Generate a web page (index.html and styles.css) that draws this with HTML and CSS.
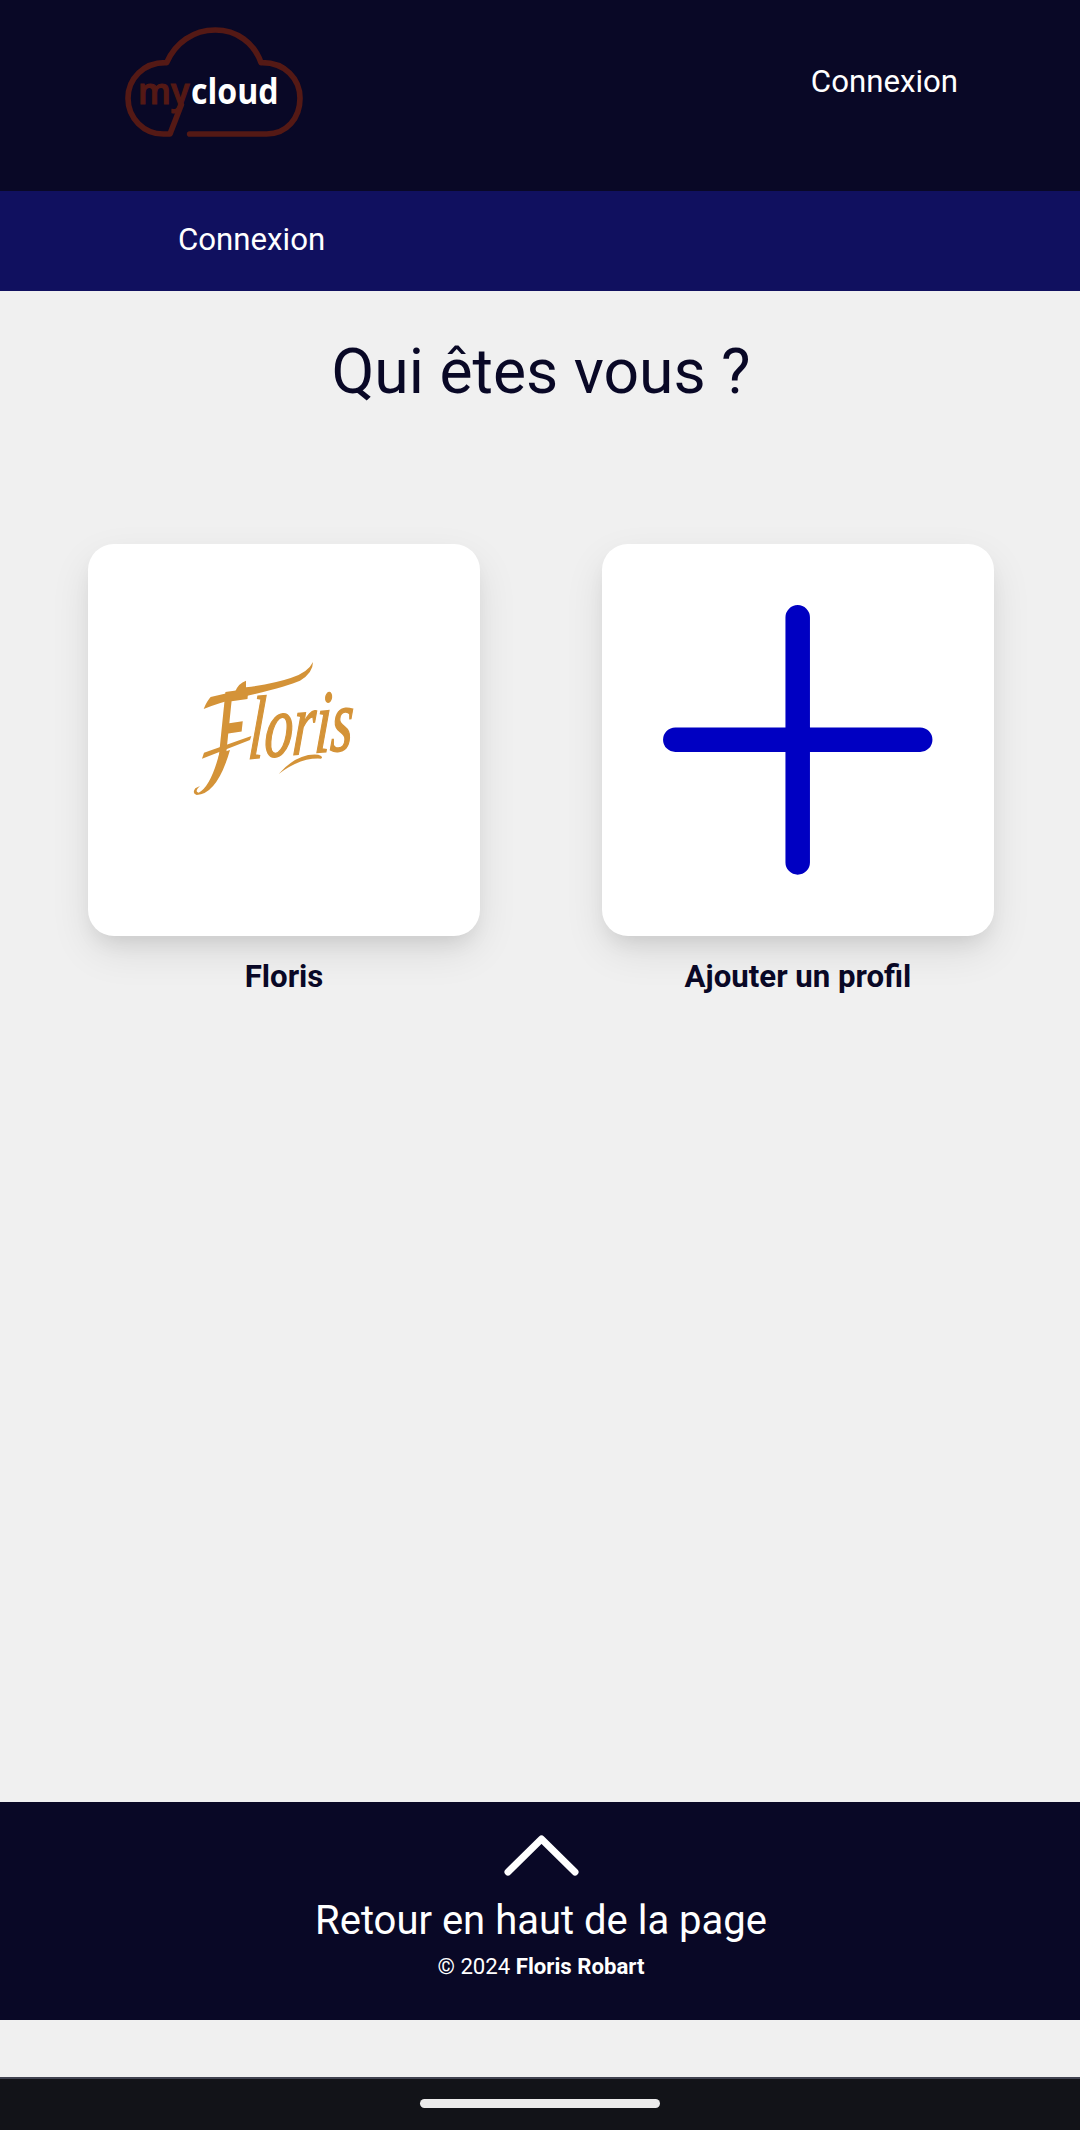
FILE: index.html
```html
<!DOCTYPE html>
<html lang="fr">
<head>
<meta charset="utf-8">
<title>mycloud</title>
<link rel="stylesheet" href="styles.css">
</head>
<body>
<header class="header">
  <a class="logo" href="#">
    <svg width="210" height="140" viewBox="0 0 630 420">
      <path class="cloud" d="M239 372H470C530 372 570 325 570 265C570 207 525 156 453 158C432 98 380 60 316 60C250 60 196 98 170 158C100 156 54 207 54 265C54 325 102 372 160 372H180L214 284"/>
      <text class="logo-my" x="84" y="283" textLength="154" lengthAdjust="spacingAndGlyphs">my</text>
      <text class="logo-cloud" x="243" y="283" textLength="263" lengthAdjust="spacingAndGlyphs">cloud</text>
    </svg>
  </a>
  <a class="login" href="#">Connexion</a>
</header>
<nav class="nav"><a href="#">Connexion</a></nav>
<main class="main">
  <h1 class="title">Qui êtes vous ?</h1>
  <div class="profiles">
    <a class="profile" href="#">
      <span class="card">
        <svg width="392" height="392" viewBox="0 0 1176 1176">
          <g transform="translate(246 288)">
            <text class="signature initial" transform="translate(138 372) rotate(-8) skewX(-10)" textLength="88" lengthAdjust="spacingAndGlyphs">F</text>
            <text class="signature letters" transform="translate(232 356) rotate(-5) skewX(-9)" textLength="314" lengthAdjust="spacingAndGlyphs">loris</text>
            <path class="ink" d="M101 207Q110 184 122 171L196 154Q205 130 228 122L228 142Q312 131 362 114Q414 98 429 66Q429 99 390 122Q350 140 218 171Q150 187 101 207Z"/>
            <path class="ink" d="M180 330Q142 462 80 465Q65 460 76 445L90 438Q72 455 86 458Q122 440 148 340Z"/>
            <path class="ink" d="M96 356L102 338L244 288L240 300Z"/>
            <path class="ink" d="M326 402Q382 338 445 344Q462 350 453 356Q391 352 326 402Z"/>
          </g>
        </svg>
      </span>
      <span class="name">Floris</span>
    </a>
    <a class="profile" href="#">
      <span class="card">
        <svg width="392" height="392" viewBox="0 0 392 392">
          <path class="plus" d="M195.700 73.300V318.400M73.300 195.700H318.200"/>
        </svg>
      </span>
      <span class="name">Ajouter un profil</span>
    </a>
  </div>
</main>
<footer class="footer">
  <a class="top-link" href="#">
    <svg width="76" height="44" viewBox="0 0 76 44"><path class="chevron" d="M5 37L38.500 4L72 37"/></svg>
    <span>Retour en haut de la page</span>
  </a>
  <p class="copyright">© 2024 <strong>Floris Robart</strong></p>
</footer>
<div class="system-bar"><span class="handle"></span></div>
</body>
</html>
```
FILE: styles.css
```css
* { box-sizing: border-box; }
body {
  margin: 0;
  min-height: 2130px;
  display: flex;
  flex-direction: column;
  background: #f0f0f0;
  color: #090826;
  font: 31.2px/42px Roboto, sans-serif;
}
a { color: inherit; text-decoration: none; }
svg { display: block; }
.header {
  height: 191px;
  padding: 10px 122px 0 110px;
  display: flex;
  justify-content: space-between;
  background: #090826;
  color: #fff;
}
.login { padding-top: 51px; }
.cloud { fill: none; stroke: #541915; stroke-width: 17; stroke-linecap: round; stroke-linejoin: round; }
.logo-my { font: 600 106px "Open Sans", sans-serif; fill: #541915; stroke: #541915; stroke-width: 3.5; }
.logo-cloud { font: 700 108px "Open Sans", sans-serif; fill: #fff; }
.nav {
  height: 100px;
  padding: 28px 178px;
  background: #10105f;
  color: #fff;
}
.main { height: 1511px; padding-top: 41px; }
.title { margin: 0; padding-left: 2px; font-size: 62.4px; line-height: 80px; font-weight: 400; text-align: center; }
.profiles { display: flex; justify-content: center; gap: 122px; margin: 132px 0 0 2px; }
.profile { display: flex; flex-direction: column; align-items: center; gap: 20px; width: 392px; }
.card {
  display: block;
  border-radius: 26px;
  background: #fff;
  box-shadow: 0 16px 40px rgba(0, 0, 0, .09), 0 12px 21px -8px rgba(0, 0, 0, .1);
}
.name { font-weight: 700; }
.signature { font-style: italic; fill: #d49338; }
.initial { font-family: Lato, sans-serif; font-size: 290px; font-weight: 700; }
.letters { font-family: "Liberation Serif", serif; font-size: 265px; stroke: #d49338; stroke-width: 5; }
.ink { fill: #d49338; }
.plus { fill: none; stroke: #0000c2; stroke-width: 24.500; stroke-linecap: round; }
.footer {
  height: 218px;
  padding-top: 33px;
  background: #090826;
  color: #fff;
  text-align: center;
}
.top-link { display: flex; flex-direction: column; align-items: center; gap: 16px; padding-left: 2px; font-size: 40px; line-height: 52px; }
.chevron { fill: none; stroke: #fff; stroke-width: 7; stroke-linecap: round; stroke-linejoin: round; }
.copyright { margin: 4px 0 0 2px; font-size: 22.2px; line-height: 30px; }
.system-bar {
  height: 53px;
  margin-top: auto;
  padding-top: 20px;
  border-top: 2px solid #414350;
  background: #121318;
}
.handle { display: block; width: 240px; height: 9px; margin: 0 auto; border-radius: 5px; background: #ebebeb; }
```
